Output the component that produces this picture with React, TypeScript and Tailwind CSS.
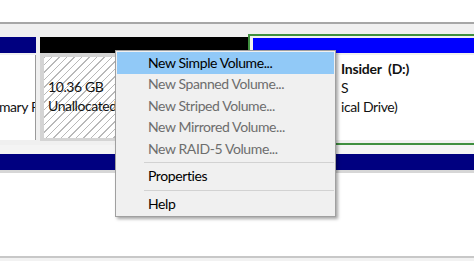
import React from "react";

const font = { fontFamily: 'Lato, "Noto Sans", Arial, sans-serif' };

function MenuItem({ label, disabled, active }: { label: string; disabled?: boolean; active?: boolean }) {
  return (
    <div
      className={
        "h-[21.5px] flex items-center pl-[31px] whitespace-nowrap text-[14px] leading-none " +
        (active ? "bg-[#91c9f7] " : "") +
        (disabled ? "text-[#6d6d6d]" : "text-[#000000]")
      }
    >
      {label}
    </div>
  );
}

function Separator() {
  return (
    <div className="h-[6px] flex items-center pl-[27px]">
      <div className="h-px w-full bg-[#d2d2d2]" />
    </div>
  );
}

function HiddenLine({ prefix, rest, bold }: { prefix: string; rest: string; bold?: boolean }) {
  return (
    <div className={"h-[19px] flex items-center whitespace-pre text-[14px] text-[#111111] " + (bold ? "font-bold tracking-[-0.2px]" : "")}>
      <span className="w-[79px] overflow-hidden flex justify-end">{prefix}</span>
      <span className="ml-[5px]">{rest}</span>
    </div>
  );
}

export default function App() {
  return (
    <div className="relative w-[474px] h-[261px] overflow-hidden bg-white flex flex-col tracking-[-0.4px]" style={font}>
      <div className="h-[22px] bg-white shrink-0" />
      <div className="h-[2px] bg-[#a7a7a7] shrink-0" />
      <div className="h-[10px] bg-[#f0f0f0] shrink-0" />

      {/* disk row */}
      <div className="h-[111px] shrink-0 bg-[#f0f0f0] flex">
        {/* left partition */}
        <div className="w-[36px] shrink-0 pt-[3px] flex flex-col">
          <div className="h-[16px] bg-[#000080]" />
          <div className="mt-[2px] h-[85px] bg-white border-r border-[#9a9a9a] overflow-hidden pt-[4px]">
            <div className="ml-[-68px] whitespace-nowrap text-[14px] text-[#111111]">
              <div className="h-[19px]" />
              <div className="h-[19px]" />
              <div className="h-[19px] flex items-center">Healthy (Primary Partition)</div>
            </div>
          </div>
        </div>
        <div className="w-[4px] shrink-0" />
        {/* unallocated */}
        <div className="w-[208px] shrink-0 pt-[3px] flex flex-col">
          <div className="h-[16px] bg-black" />
          <div className="h-[88px] bg-[#d4d4d4] pl-[4px] pr-[3px] pt-[4px] pb-[3px] flex">
            <div className="flex-1 bg-[image:repeating-linear-gradient(135deg,#b9b9b9_0px,#b9b9b9_1px,#ffffff_1px,#ffffff_5.3px)] pl-[4px] pt-[1px]">
              <div className="h-[19px]" />
              <div className="h-[19px] flex items-center text-[14px] text-[#111111] whitespace-nowrap">10.36 GB</div>
              <div className="h-[19px] flex items-center text-[14px] text-[#111111] whitespace-nowrap">Unallocated</div>
            </div>
          </div>
        </div>
        {/* extended partition with logical drive */}
        <div className="flex-1 -mr-[12px] border-2 border-[#3f8f3f] pl-[3px] pt-[2px] flex flex-col">
          <div className="h-[15px] bg-[#0000ff]" />
          <div className="mt-[2px] h-[85px] bg-white pt-[4px] pl-[4px]">
            <HiddenLine prefix="Windows 10 " rest="Insider  (D:)" bold />
            <HiddenLine prefix="20.00 GB NTF" rest="S" />
            <HiddenLine prefix="Healthy (Log" rest="ical Drive)" />
          </div>
        </div>
      </div>

      <div className="h-[9px] shrink-0 bg-[#f4f4f4]" />
      <div className="h-[16px] shrink-0 bg-[#000080]" />
      <div className="h-[3px] shrink-0 bg-[#d6d6d6]" />
      <div className="flex-1 bg-white" />
      <div className="h-[2px] shrink-0 bg-[#c8c8c8]" />
      <div className="h-[3px] shrink-0 bg-[#f2f2f2]" />

      {/* context menu */}
      <div className="absolute left-[115px] top-[50px] w-[221px] bg-[#f0f0f0] border border-[#a0a0a0] p-px shadow-[2px_2px_3px_rgba(0,0,0,0.35)]">
        <MenuItem label="New Simple Volume..." active />
        <MenuItem label="New Spanned Volume..." disabled />
        <MenuItem label="New Striped Volume..." disabled />
        <MenuItem label="New Mirrored Volume..." disabled />
        <MenuItem label="New RAID-5 Volume..." disabled />
        <Separator />
        <MenuItem label="Properties" />
        <Separator />
        <MenuItem label="Help" />
      </div>
    </div>
  );
}
